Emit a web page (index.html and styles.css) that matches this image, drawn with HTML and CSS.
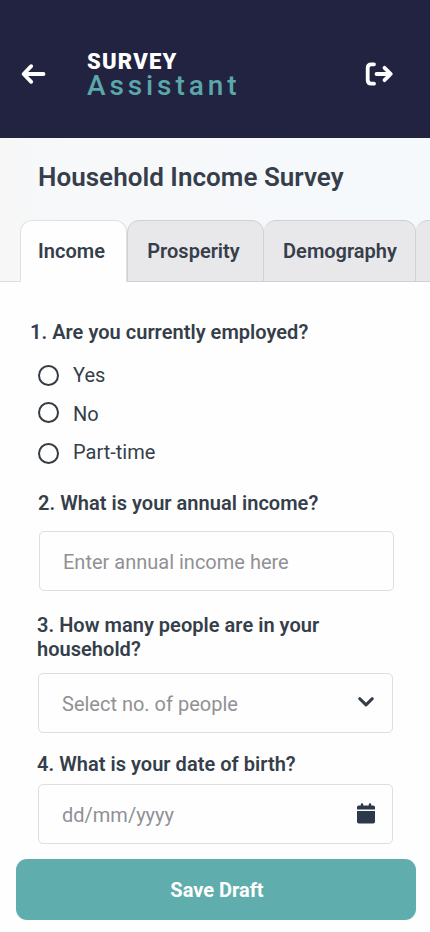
FILE: index.html
```html
<!DOCTYPE html>
<html lang="en">
<head>
<meta charset="utf-8">
<meta name="viewport" content="width=device-width, initial-scale=1">
<title>Household Income Survey</title>
<link rel="stylesheet" href="styles.css">
</head>
<body>
<header class="topbar">
  <a class="back" href="#" aria-label="Back">
    <svg width="26" height="24" viewBox="0 0 26 24"><path d="M23.5 12H4M11.2 4.2L3.6 12l7.6 7.8"/></svg>
  </a>
  <div class="brand">
    <span class="brand-top">SURVEY</span>
    <span class="brand-bottom">Assistant</span>
  </div>
  <a class="logout" href="#" aria-label="Log out">
    <svg width="30" height="26" viewBox="0 0 30 26"><path d="M9 3.3H6.3Q2.7 3.3 2.7 6.9V19.1Q2.7 22.7 6.3 22.7H9M11.5 13H25.6M19.5 6.8L25.8 13l-6.3 6.2"/></svg>
  </a>
</header>
<section class="heading">
  <h1>Household Income Survey</h1>
  <nav class="tabs">
    <a class="tab active" href="#">Income</a>
    <a class="tab prosperity" href="#">Prosperity</a>
    <a class="tab demography" href="#">Demography</a>
    <a class="tab more" href="#" aria-label="More"></a>
  </nav>
</section>
<main class="form">
  <fieldset class="employment">
    <legend>1. Are you currently employed?</legend>
    <label class="option"><input type="radio" name="employed"><span>Yes</span></label>
    <label class="option option-no"><input type="radio" name="employed"><span>No</span></label>
    <label class="option option-part"><input type="radio" name="employed"><span>Part-time</span></label>
  </fieldset>
  <div class="question income">
    <h2>2. What is your annual income?</h2>
    <div class="field"><span>Enter annual income here</span></div>
  </div>
  <div class="question people">
    <h2>3. How many people are in your household?</h2>
    <div class="field">
      <span>Select no. of people</span>
      <svg class="chevron" width="18" height="12" viewBox="0 0 18 12"><path d="M2.7 2.7L9 8.8l6.3-6.1"/></svg>
    </div>
  </div>
  <div class="question birth">
    <h2>4. What is your date of birth?</h2>
    <div class="field">
      <span>dd/mm/yyyy</span>
      <svg class="calendar" width="18" height="21" viewBox="0 0 18 21"><path d="M0 6.5V4.3Q0 2.5 1.8 2.5H3.8V1.2Q3.8.3 5 .3T6.2 1.2V2.5h5.6V1.2Q11.8.3 13 .3T14.2 1.2V2.5h2Q18 2.5 18 4.3V6.5ZM0 8H18V18.7Q18 20.5 16.2 20.5H1.8Q0 20.5 0 18.7Z"/></svg>
    </div>
  </div>
</main>
<footer class="actions"><button type="button">Save Draft</button></footer>
</body>
</html>
```
FILE: styles.css
```css
* { box-sizing: border-box; }

body {
  margin: 0;
  height: 932px;
  overflow: hidden;
  background: #fefefe;
  color: #353e4a;
  font-family: Roboto, "Liberation Sans", sans-serif;
}

a { color: inherit; text-decoration: none; }
svg { display: block; fill: none; stroke-linecap: round; stroke-linejoin: round; }

.topbar {
  display: flex;
  height: 138px;
  padding: 0 35px 0 20px;
  background: #212340;
}
.topbar svg { stroke: #fff; stroke-width: 3.8; }
.back { width: 67px; padding-top: 62px; }
.logout { margin-left: auto; padding-top: 61px; }
.brand {
  display: flex;
  flex-direction: column;
  padding-top: 49px;
  white-space: nowrap;
}
.brand-top {
  height: 23px;
  color: #fff;
  font-size: 22px;
  font-weight: 900;
  letter-spacing: 1.2px;
  line-height: 25px;
}
.brand-bottom {
  height: 28px;
  color: #5ba7aa;
  font-size: 28px;
  font-weight: 500;
  letter-spacing: 3.9px;
  line-height: 28px;
}

.heading {
  height: 144px;
  background: linear-gradient(90deg, #f7f7f7, #f6f8fa 15%, #f6f9fb);
}
h1 {
  height: 82px;
  margin: 0;
  padding: 23px 0 0 38px;
  font-size: 26px;
  font-weight: 600;
  letter-spacing: 0.03px;
  line-height: 32px;
  white-space: nowrap;
}
.tabs {
  display: flex;
  height: 62px;
  padding-left: 20px;
  overflow: hidden;
  box-shadow: inset 0 -1px #dededf;
}
.tab {
  flex: none;
  border: 1px solid #d0d1d5;
  border-left-width: 0;
  border-radius: 12px 12px 0 0;
  background: #e8e8eb;
  font-size: 20px;
  font-weight: 600;
  line-height: 60px;
  text-align: center;
}
.active { width: 107px; padding-right: 4px; border: 1px solid #dfe0e4; border-bottom: 0; background: #fefefe; }
.prosperity { width: 137px; border-left-width: 1px; padding-right: 4px; }
.demography { width: 152px; padding-left: 1px; }
.more { width: 80px; }

fieldset { height: 182px; margin: 0; padding: 0 0 0 30px; border: 0; }
legend, h2 {
  margin: 0;
  padding: 0;
  font-size: 20px;
  font-weight: 600;
  letter-spacing: 0.03px;
  line-height: 24px;
}
legend { padding-top: 38px; height: 74px; }
.option {
  display: flex;
  align-items: center;
  height: 38px;
  padding-left: 8px;
  gap: 15px;
  font-size: 20px;
  line-height: 24px;
}
.option input {
  appearance: none;
  width: 21px;
  height: 21px;
  margin: 0 -1px 0 0;
  border: 2px solid #353b43;
  border-radius: 50%;
}
.option-no, .option-part { padding-top: 2px; }
.option-no input { margin-bottom: 4px; }
.option-part input { margin-top: 2px; }

.form { height: 577px; }
.income { padding: 27px 0 0 38px; }
.income .field { margin: 16px 0 0 1px; }
.people { padding: 22px 0 0 37px; }
.people h2 { width: 320px; }
.people .field { margin: 12px 0 0 1px; }
.birth { padding: 19px 0 0 37px; }
.birth .field { margin: 8px 0 0 1px; }
.field {
  display: flex;
  align-items: center;
  justify-content: space-between;
  width: 355px;
  height: 60px;
  padding: 2px 17px 0 23px;
  border: 1px solid #dedee2;
  border-radius: 5px;
  color: #919094;
  font-size: 20px;
}
.chevron { margin-bottom: 4px; stroke: #343c46; stroke-width: 3; }
.calendar { fill: #2c394a; margin-bottom: 3px; }

.actions { padding: 0 14px 0 16px; }
button {
  display: block;
  width: 100%;
  height: 61px;
  padding: 2px 0 0 2px;
  border: 0;
  border-radius: 11px;
  background: #5fadac;
  color: #fff;
  font: 700 20px/59px Roboto, "Liberation Sans", sans-serif;
}
```
